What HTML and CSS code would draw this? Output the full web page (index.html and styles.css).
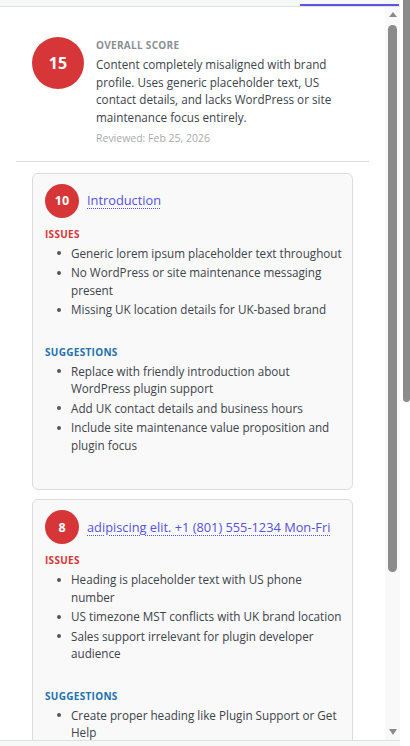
FILE: index.html
```html
<!DOCTYPE html>
<html lang="en">
<head>
<meta charset="utf-8">
<title>Content Review</title>
<link rel="stylesheet" href="styles.css">
</head>
<body>
<div class="app">
  <div class="main">
    <div class="topbar"><span class="tab-underline"></span></div>
    <div class="panel">
      <div class="content">
        <section class="overall">
          <div class="score-lg">15</div>
          <div class="overall-text">
            <div class="label-overall">Overall Score</div>
            <p class="summary">Content completely misaligned with brand profile. Uses generic placeholder text, US contact details, and lacks WordPress or site maintenance focus entirely.</p>
            <div class="reviewed">Reviewed: Feb 25, 2026</div>
          </div>
        </section>
        <div class="divider"></div>
        <div class="cards">
          <article class="card">
            <div class="card-head">
              <div class="score-sm">10</div>
              <a class="head-link" href="#">Introduction</a>
            </div>
            <div class="section">
              <div class="section-label issues">Issues</div>
              <ul class="list">
                <li>Generic lorem ipsum placeholder text throughout</li>
                <li>No WordPress or site maintenance messaging present</li>
                <li>Missing UK location details for UK-based brand</li>
              </ul>
            </div>
            <div class="section">
              <div class="section-label sugg">Suggestions</div>
              <ul class="list">
                <li>Replace with friendly introduction about WordPress plugin support</li>
                <li>Add UK contact details and business hours</li>
                <li>Include site maintenance value proposition and plugin focus</li>
              </ul>
            </div>
          </article>
          <article class="card">
            <div class="card-head">
              <div class="score-sm">8</div>
              <a class="head-link" href="#">adipiscing elit. +1 (801) 555-1234 Mon-Fri</a>
            </div>
            <div class="section">
              <div class="section-label issues">Issues</div>
              <ul class="list">
                <li>Heading is placeholder text with US phone number</li>
                <li>US timezone MST conflicts with UK brand location</li>
                <li>Sales support irrelevant for plugin developer audience</li>
              </ul>
            </div>
            <div class="section">
              <div class="section-label sugg">Suggestions</div>
              <ul class="list">
                <li>Create proper heading like Plugin Support or Get Help</li>
              </ul>
            </div>
          </article>
        </div>
      </div>
      <div class="vscroll">
        <span class="arrow up"></span>
        <span class="thumb"></span>
        <span class="spacer"></span>
        <span class="arrow down"></span>
      </div>
    </div>
    <div class="bottombar"></div>
  </div>
  <div class="outer-scroll"><span class="outer-thumb"></span></div>
</div>
</body>
</html>
```
FILE: styles.css
```css
* { box-sizing: border-box; }
html, body { margin: 0; padding: 0; background: #fff; }
body {
  font-family: "Open Sans", "Noto Sans", sans-serif;
  color: #3c434a;
}
.app { display: flex; width: 410px; height: 746px; overflow: hidden; }
.main { width: 400px; display: flex; flex-direction: column; }
.topbar {
  height: 7px;
  background: #f6f7f7;
  border-bottom: 1px solid #e0e0e0;
  display: flex;
  justify-content: flex-end;
  align-items: flex-end;
  flex: none;
}
.tab-underline { width: 99px; height: 2px; margin-right: 1px; background: #5b57e0; }
.panel { flex: 1; min-height: 0; display: flex; }
.bottombar {
  height: 6px;
  flex: none;
  background: #f6f7f7;
  border-top: 1px solid #e0e0e0;
}
.content { flex: 1; min-width: 0; overflow: hidden; padding: 0 16px; }

.overall { display: flex; align-items: flex-start; gap: 12px; padding: 30px 16px 15px; }
.score-lg {
  flex: none;
  width: 52px; height: 52px; border-radius: 50%;
  background: #d63638; color: #fff;
  display: flex; align-items: center; justify-content: center;
  font-weight: 700; font-size: 16px;
}
.overall-text { width: 250px; padding-top: 1px; }
.label-overall {
  font-size: 10px; font-weight: 700; letter-spacing: .3px;
  line-height: 15px; text-transform: uppercase; color: #8c8f94;
}
.summary { margin: 3px 0 0; font-size: 11.7px; line-height: 17.5px; color: #3c434a; }
.reviewed { margin-top: 4.5px; font-size: 10.5px; line-height: 15px; color: #a7aaad; }

.divider { height: 1px; background: #dcdcde; }
.cards { padding: 11px 16px 0; }
.card {
  border: 1px solid #dcdcde;
  border-radius: 6px;
  background: #f9f9f9;
  padding: 10px 8px 33px 12px;
  margin-bottom: 9px;
}
.card-head { display: flex; align-items: center; gap: 8px; margin-bottom: 9px; }
.score-sm {
  flex: none;
  width: 34px; height: 34px; border-radius: 50%;
  background: #d63638; color: #fff;
  display: flex; align-items: center; justify-content: center;
  font-weight: 700; font-size: 12.5px;
}
.head-link {
  font-size: 12.8px; line-height: 17px;
  color: #5450e0;
  text-decoration: underline dotted;
  text-underline-offset: 3px;
  text-decoration-thickness: 1px;
}
.section + .section { margin-top: 26px; }
.section-label {
  font-size: 10px; font-weight: 700; letter-spacing: .3px;
  line-height: 14px; text-transform: uppercase;
}
.issues { color: #d63638; }
.sugg { color: #2271b1; }
.list { margin: 4px 0 0; padding: 0; list-style: none; }
.list li {
  display: flex;
  font-size: 11.7px; line-height: 17.5px;
  margin-bottom: 2px;
  color: #3c434a;
}
.list li::before {
  content: "";
  flex: none;
  width: 4px; height: 4px; border-radius: 50%;
  background: #50575e;
  margin: 6.75px 10.5px 0 11.5px;
}

.vscroll {
  width: 15px; flex: none;
  background: #f9f9f9;
  display: flex; flex-direction: column; align-items: center;
}
.arrow { width: 0; height: 0; border-left: 4.5px solid transparent; border-right: 4.5px solid transparent; flex: none; }
.arrow.up { margin-top: 5px; border-bottom: 5px solid #8b8b8b; }
.arrow.down { margin-bottom: 5px; border-top: 6px solid #8b8b8b; }
.thumb { flex: none; width: 9px; height: 547px; margin-top: 8px; border-radius: 4.5px; background: #8b8b8b; }
.spacer { flex: 1; }

.outer-scroll { width: 10px; flex: none; background: #fff; }
.outer-thumb {
  display: block;
  width: 7px; height: 402px; margin-left: 3px;
  background: #8b8b8b;
  border-radius: 0 0 3.5px 3.5px;
}
```
